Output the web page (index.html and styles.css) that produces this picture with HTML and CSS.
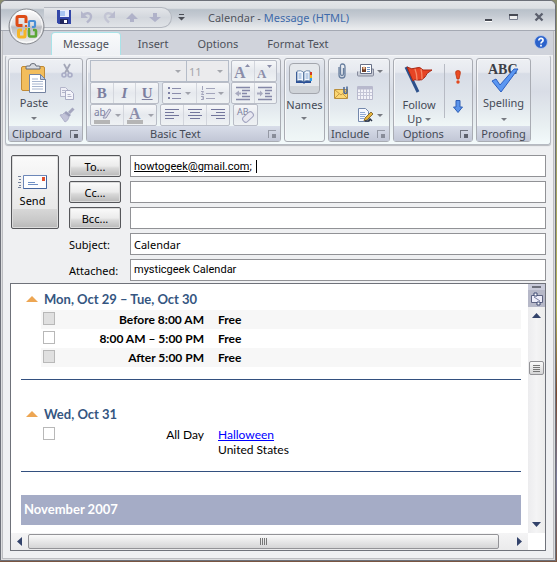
FILE: index.html
```html
<!DOCTYPE html>
<html lang="en">
<head>
<meta charset="utf-8">
<meta name="viewport" content="width=device-width, initial-scale=1">
<title>Calendar - Message (HTML)</title>
<link rel="stylesheet" href="styles.css">
</head>
<body>
<main class="window">
  <header class="titlebar">
    <button class="orb" aria-label="Office Button">
      <svg width="37" height="37" viewBox="0 0 37 37">
        <defs><linearGradient id="orb" x1="0" y1="0" x2="0" y2="1"><stop offset="0" stop-color="#fff"/><stop offset=".45" stop-color="#dcdde0"/><stop offset=".52" stop-color="#b9bbc0"/><stop offset="1" stop-color="#f4f4f5"/></linearGradient></defs>
        <circle cx="18.500" cy="18.500" r="17.500" fill="url(#orb)" stroke="#85888e"/>
        <circle cx="18.500" cy="18.500" r="16" fill="none" stroke="#fff" stroke-opacity=".8"/>
        <g fill="none" stroke-width="3" stroke-linejoin="round">
          <path d="M18 15V10q0-1.500-1.500-1.500H10.500Q9 8.500 9 10v6q0 1.500 1.500 1.500h4" stroke="#dd4b16"/>
          <path d="M21 17v-3q0-1 1-1h4q1 0 1 1v4q0 1-1 1h-2" stroke="#4b8fd6" stroke-width="2.200"/>
          <path d="M17 22v6q0 1-1 1h-4q-1.500 0-1.500-1.500V23q0-1 1-1H14" stroke="#f5b526"/>
          <path d="M21 22v5q0 1.500 1 1.500h5q1 0 1-1V23q0-1-1-1h-2" stroke="#5aa735" stroke-width="2.600"/>
        </g>
        <g fill="#e0571c"><rect x="17" y="17" width="2" height="2"/><rect x="20" y="17" width="2" height="2" fill="#4b8fd6"/><rect x="17" y="20" width="2" height="2" fill="#f5b526"/><rect x="20" y="20" width="2" height="2" fill="#5aa735"/></g>
      </svg>
    </button>
    <div class="quick">
      <button aria-label="Save"><svg width="14" height="14" viewBox="0 0 14 14"><path d="M0 0h14v14H1.500L0 12.500z" fill="#3347a8"/><path d="M3 0h9v7H3z" fill="#e8eefc"/><path d="M3 1h5v5H3z" fill="#a9c6f2"/><path d="M3 9h8v5H3z" fill="#20275c"/><path d="M7 10h3v3H7z" fill="#fff"/></svg></button>
      <button aria-label="Undo"><svg width="14" height="14" viewBox="0 0 14 14"><path d="M3 5.500C5 2.500 11.500 2 11 7c-.3 2.500-2 3.500-4 5.500" fill="none" stroke="#b4b6cb" stroke-width="2.500"/><path d="M1 1l0 7h7z" fill="#b4b6cb"/></svg></button>
      <button aria-label="Redo"><svg width="14" height="14" viewBox="0 0 14 14"><path d="M10 5.500C8 2.500 1.500 2 2 7c.3 2.500 2 3.500 4 5.500" fill="none" stroke="#c3c5d4" stroke-width="2.500"/><path d="M12 1v7H5z" fill="#b9bbce"/></svg></button>
      <button aria-label="Previous item"><svg width="14" height="14" viewBox="0 0 14 14"><path d="M6 3l6 6H8v3H4V9H0z" fill="#b0b2c9"/></svg></button>
      <button aria-label="Next item"><svg width="14" height="14" viewBox="0 0 14 14"><path d="M6 12L0 7h4V3h4v4h4z" fill="#b0b2c9"/></svg></button>
    </div>
    <button class="customize" aria-label="Customize Quick Access Toolbar"><svg width="7" height="7" viewBox="0 0 7 7"><path d="M1 0h5v1H1zM0 3h7L3.500 6.500z" fill="#4c4f57"/></svg></button>
    <h1 class="title">Calendar - <span>Message (HTML)</span></h1>
    <div class="caption">
      <button aria-label="Minimize"><svg width="10" height="10" viewBox="0 0 10 10"><path d="M1 7h7v2H1z" fill="#474a53"/><path d="M1 9h7v1H1z" fill="#fff"/></svg></button>
      <button aria-label="Maximize"><svg width="10" height="10" viewBox="0 0 10 10"><path d="M.5 2.500h8v5h-8z" fill="#eee" stroke="#777d8c"/><path d="M0 2h9v2H0z" fill="#474a53"/></svg></button>
      <button aria-label="Close"><svg width="10" height="10" viewBox="0 0 10 10"><path d="M1.500 1.500l7 7M8.500 1.500l-7 7" stroke="#5b606d" stroke-width="2.300"/></svg></button>
    </div>
  </header>

  <nav class="tabs">
    <a class="tab active" href="#message">Message</a>
    <a class="tab" href="#insert">Insert</a>
    <a class="tab" href="#options">Options</a>
    <a class="tab" href="#format">Format Text</a>
    <button class="help" aria-label="Help"><svg width="14" height="14" viewBox="0 0 14 14"><circle cx="7" cy="7" r="6.500" fill="#2b62cb" stroke="#b9c8e8"/><path d="M4.800 5.500C4.800 2.500 9.500 2.800 9 5.500 8.700 7 7 6.800 7 8.500M7 9.800v1.600" fill="none" stroke="#fff" stroke-width="1.700"/></svg></button>
  </nav>

  <div class="ribbon">
    <section class="group clipboard">
      <div class="tools">
        <button class="big">
          <svg width="28" height="31" viewBox="0 0 28 31"><rect x="1.500" y="3.500" width="23" height="24" rx="1.500" fill="#f2bd5c" stroke="#c18a35"/><path d="M6 6V4q0-1 1-1h3q0-2.500 3-2.500T16 3h3q1 0 1 1v2z" fill="#d9dce2" stroke="#676d78"/><path d="M9.500 11.500h11l5 5v13h-16z" fill="#fff" stroke="#7483a0"/><path d="M20.500 11.500v5h5z" fill="#bccbe4" stroke="#7483a0"/><path d="M12 16h6M12 18.500h11M12 21h11M12 23.500h11M12 26h11" stroke="#a8b6cf"/></svg>
          <span>Paste</span><i class="arrow"></i>
        </button>
        <div class="stack">
          <button aria-label="Cut"><svg width="16" height="16" viewBox="0 0 16 16"><path d="M5 1l5 9M11 1L6 10" stroke="#a3a6b7" stroke-width="1.800"/><circle cx="5" cy="12" r="2" fill="none" stroke="#a9acc6" stroke-width="1.600"/><circle cx="11" cy="12" r="2" fill="none" stroke="#a9acc6" stroke-width="1.600"/></svg></button>
          <button aria-label="Copy"><svg width="16" height="16" viewBox="0 0 16 16"><path d="M1.500 2.500h5l3 3v6h-8z" fill="#eeeef6" stroke="#b3b5ca"/><path d="M6.500 5.500h5l3 3v6h-8z" fill="#f4f4fa" stroke="#a9abc4"/><path d="M3 5.500h3M3 7.500h3M8.500 9.500h3M8.500 11.500h4" stroke="#b3b5ca"/></svg></button>
          <button aria-label="Format Painter"><svg width="16" height="16" viewBox="0 0 16 16"><path d="M14.500 1.500L10 6" stroke="#a5a7bf" stroke-width="3"/><path d="M7 4l5 4-2 2-5-4z" fill="#9c9eba"/><path d="M5 6l5 4q-1 4-4 5L1 8q3 0 4-2z" fill="#c2c3d8" stroke="#b0b2ca"/></svg></button>
        </div>
      </div>
      <h2>Clipboard<button class="launch" aria-label="Clipboard options"></button></h2>
    </section>

    <section class="group basic">
      <div class="tools">
        <div class="row">
          <label class="pick font"><select aria-label="Font"><option></option></select></label>
          <label class="pick size"><select aria-label="Font size"><option>11</option></select></label>
          <div class="set end"><button aria-label="Grow Font"><svg width="18" height="18" viewBox="0 0 18 18"><text x="0" y="16" class="serif" font-size="16">A</text><path d="M11 5l2.500-3L16 5z" fill="#8b8eaa"/></svg></button><button aria-label="Shrink Font"><svg width="18" height="18" viewBox="0 0 18 18"><text x="1" y="16" class="serif" font-size="13">A</text><path d="M11 3l2.500 3L16 3z" fill="#8b8eaa"/></svg></button></div>
        </div>
        <div class="row">
          <div class="set biu"><button class="serif b">B</button><button class="serif i">I</button><button class="serif u">U</button></div>
          <div class="set lists">
            <button aria-label="Bullets"><svg width="14" height="14" viewBox="0 0 14 14"><path d="M4 2.500h9M4 7.500h9M4 12.500h9" stroke="#8b8dab"/><path d="M0 1h2v2H0zM0 6h2v2H0zM0 11h2v2H0z" fill="#7d80a5"/></svg><i class="arrow"></i></button>
            <button aria-label="Numbering"><svg width="14" height="14" viewBox="0 0 14 14"><path d="M5 2.500h9M5 7.500h9M5 12.500h9" stroke="#a3a5bb"/><path d="M1.500 0v4M0 5.500h2.500L.5 8.500H3M0 10.500h2.500v3H0M1 12h1" fill="none" stroke="#a3a5bb"/></svg><i class="arrow"></i></button>
          </div>
          <div class="set end">
            <button aria-label="Decrease Indent"><svg width="16" height="15" viewBox="0 0 16 15"><path d="M1 1.500h14M7 4.500h8M7 7.500h5M7 10.500h8M1 13.500h14" stroke="#8588a8" stroke-width="1.500"/><path d="M0 7.500l4-3v2h2v2H4v2z" fill="#a8aabf"/></svg></button>
            <button aria-label="Increase Indent"><svg width="16" height="15" viewBox="0 0 16 15"><path d="M1 1.500h14M8 4.500h7M8 7.500h5M8 10.500h7M1 13.500h14" stroke="#8588a8" stroke-width="1.500"/><path d="M6 7.500l-3-3v2H0v2h3v2z" fill="#a8aabf"/></svg></button>
          </div>
        </div>
        <div class="row">
          <div class="set colors">
            <button aria-label="Text Highlight Color"><svg width="18" height="18" viewBox="0 0 18 18"><text x="0" y="10" font-size="10" class="ab">ab</text><path d="M9 12l6-9 2 1-5 8z" fill="#d9dae6" stroke="#9497b3"/><path d="M0 14h16v4H0z" fill="#b5b5b5"/></svg><i class="arrow"></i></button>
            <button aria-label="Font Color"><svg width="18" height="18" viewBox="0 0 18 18"><text x="2" y="13" font-size="16" class="serif">A</text><path d="M0 14h16v4H0z" fill="#b5b5b5"/></svg><i class="arrow"></i></button>
          </div>
          <div class="set aligns">
            <button aria-label="Align Left"><svg width="14" height="14" viewBox="0 0 14 14"><path d="M0 1.500h14M0 4.500h9M0 7.500h14M0 10.500h9" stroke="#73769c"/></svg></button>
            <button aria-label="Center"><svg width="14" height="14" viewBox="0 0 14 14"><path d="M0 1.500h14M2 4.500h10M0 7.500h14M2 10.500h10" stroke="#73769c"/></svg></button>
            <button aria-label="Align Right"><svg width="14" height="14" viewBox="0 0 14 14"><path d="M0 1.500h14M5 4.500h9M0 7.500h14M5 10.500h9" stroke="#73769c"/></svg></button>
          </div>
          <div class="set clear"><button aria-label="Clear Formatting"><svg width="18" height="18" viewBox="0 0 18 18"><text x="0" y="9" font-size="9" class="ab">AB</text><rect x="5" y="8" width="12" height="6" rx="2.500" transform="rotate(-42 11 11)" fill="#e8e8f1" stroke="#a2a4bf"/></svg></button></div>
        </div>
      </div>
      <h2>Basic Text<button class="launch dim" aria-label="Basic Text options"></button></h2>
    </section>

    <section class="group names">
      <button class="big">
        <span class="tile"><svg width="18" height="14" viewBox="0 0 18 14"><path d="M1 2v11h7l1 1 1-1h6V2z" fill="#2a4f96"/><path d="M2 1q4-1 6.500 1v9.500Q6 10 2 11zM15 1q-4-1-6 1v9.500Q11 10 15 11z" fill="#f3f8ff" stroke="#58779f" stroke-width=".8"/><path d="M3.500 4h3M3.500 6h3M3.500 8h3M10.500 4h3M10.500 6h3M10.500 8h3" stroke="#7fa2cf"/><path d="M15 2h2v3h-2z" fill="#d33a26"/><path d="M15 5h2v3h-2z" fill="#f0b51b"/><path d="M15 8h2v3h-2z" fill="#36a2e8"/></svg></span>
        <span>Names</span><i class="arrow"></i>
      </button>
    </section>

    <section class="group include">
      <div class="tools">
        <button aria-label="Attach File"><svg width="16" height="16" viewBox="0 0 16 16"><path d="M5 4v8q0 3 3 3t3-3V4q0-3-2.500-3T6.500 4v7q0 1.500 1.500 1.500T9.500 11V5" fill="none" stroke="#697f9f" stroke-width="1.300"/></svg></button>
        <button aria-label="Business Card"><svg width="17" height="16" viewBox="0 0 17 16"><path d="M.5 8.500V12q0 1 1 1h14q1 0 1-1V6h-3" fill="#c8ccd6" stroke="#84899b"/><path d="M3.500 1.500h11v9h-11z" fill="#fff" stroke="#666f86"/><path d="M5 4h4v5H5z" fill="#6d3d27"/><circle cx="7" cy="5" r="1.500" fill="#e7b48f"/><path d="M10 4.500h3M10 6.500h3M10 8.500h3" stroke="#6d93c7"/></svg><i class="arrow"></i></button>
        <button aria-label="Attach Item"><svg width="16" height="16" viewBox="0 0 16 16"><path d="M.5 4.500h13v9H.5z" fill="#fbd774" stroke="#b98f3e"/><path d="M1 5l6 5 6-5M1 13l4-4M13 13L9 9" fill="none" stroke="#c69a45"/><path d="M10 2v5q0 1.500 1.500 1.500T13 7V1.500" fill="none" stroke="#4a6796" stroke-width="1.500"/></svg></button>
        <button aria-label="Calendar"><svg width="17" height="16" viewBox="0 0 17 16"><path d="M.5 1.500h15v13H.5z" fill="#f3f3f9" stroke="#b8b9cd"/><path d="M1 3h14" stroke="#b8b9cd" stroke-width="3"/><path d="M1 7.500h14M1 10.500h14M3.500 4v10M6.500 4v10M9.500 4v10M12.500 4v10" stroke="#c4c5d6"/></svg></button>
        <i></i>
        <button aria-label="Signature"><svg width="17" height="16" viewBox="0 0 17 16"><path d="M1.500 1.500h7l3 3v10h-10z" fill="#f6f9ff" stroke="#7488ac"/><path d="M3 5.500h5M3 7.500h6M3 9.500h5M3 11.500h4" stroke="#8fa9d3"/><path d="M14 5L8 11l-1 3 3-1 6-6z" fill="#e7b63d" stroke="#6e5420" stroke-width=".8"/><path d="M8 14h4l1-2 2 2" fill="none" stroke="#2b3447" stroke-width="1.500"/></svg><i class="arrow"></i></button>
      </div>
      <h2>Include<button class="launch dim" aria-label="Include options"></button></h2>
    </section>

    <section class="group options">
      <div class="tools">
        <button class="big">
          <svg width="28" height="28" viewBox="0 0 28 28"><path d="M1 2l12 25" stroke="#2d518c" stroke-width="3"/><path d="M2 2q5 3 9 1t7 2l9 0q-6 3-7 7-3 4-7 3t-5 1z" fill="#e64425" stroke="#a92815"/><path d="M10 4q2 5 2 11M16 4q1 4 1 10" fill="none" stroke="#f58a69" stroke-width="1.300"/></svg>
          <span>Follow<br>Up <i class="arrow"></i></span>
        </button>
        <div class="levels">
          <button aria-label="High Importance"><svg width="10" height="16" viewBox="0 0 10 16"><path d="M5 1.500q3 0 2.300 3L6 10H4L2.700 4.500Q2 1.500 5 1.500z" fill="#ec4b22" stroke="#b9340f" stroke-width=".8"/><circle cx="5" cy="13" r="1.700" fill="#e2481d"/></svg></button>
          <button aria-label="Low Importance"><svg width="10" height="16" viewBox="0 0 10 16"><path d="M3 1.500h4V8h2.500L5 13.500.5 8H3z" fill="#5a93ea" stroke="#2f5fb5"/></svg></button>
        </div>
      </div>
      <h2>Options<button class="launch" aria-label="Message options"></button></h2>
    </section>

    <section class="group proofing">
      <div class="tools">
        <button class="big">
          <svg width="32" height="30" viewBox="0 0 32 30"><text x="0" y="11" font-size="14" class="abc">ABC</text><path d="M4 18l4-2 4 6L26 6l4 0-17 23z" fill="#5b97f2" stroke="#2c5fc0"/></svg>
          <span>Spelling</span><i class="arrow"></i>
        </button>
      </div>
      <h2>Proofing</h2>
    </section>
  </div>

  <form class="compose">
    <button class="send" type="button">
      <svg width="30" height="16" viewBox="0 0 30 16"><path d="M5.500 1.500h23v13h-23z" fill="#fdfeff" stroke="#6c87b8"/><path d="M5.500 14.500h23v-13" fill="none" stroke="#45659e"/><path d="M24 3h3v4h-3z" fill="#e0502e"/><path d="M10 8.500h7M10 10.500h10" stroke="#6f90c4"/><path d="M0 2.500h3M1 5.500h2M0 8.500h3M1 11.500h2M0 13.500h3" stroke="#76839b"/></svg>
      Send
    </button>
    <div class="fields">
      <button class="pushy" type="button">To...</button>
      <div class="box to"><span>howtogeek@gmail.com</span><input aria-label="To" value="; "></div>
      <button class="pushy" type="button">Cc...</button>
      <input class="box" aria-label="Cc">
      <button class="pushy" type="button">Bcc...</button>
      <input class="box" aria-label="Bcc">
      <label for="subject">Subject:</label>
      <input class="box" id="subject" value="Calendar">
      <label for="attached">Attached:</label>
      <input class="box attached" id="attached" value="mysticgeek Calendar">
    </div>
  </form>

  <section class="editor">
    <article class="page">
      <h3>Mon, Oct 29 – Tue, Oct 30</h3>
      <table class="slots bold">
        <tr class="shade"><td><input type="checkbox" class="off" aria-label="Before 8:00 AM"></td><th>Before 8:00 AM</th><td>Free</td></tr>
        <tr><td><input type="checkbox" aria-label="8:00 AM to 5:00 PM"></td><th>8:00 AM – 5:00 PM</th><td>Free</td></tr>
        <tr class="shade"><td><input type="checkbox" class="off" aria-label="After 5:00 PM"></td><th>After 5:00 PM</th><td>Free</td></tr>
      </table>
      <hr>
      <h3>Wed, Oct 31</h3>
      <table class="slots">
        <tr><td><input type="checkbox" aria-label="All Day"></td><th>All Day</th><td><a href="#halloween">Halloween</a><br>United States</td></tr>
      </table>
      <hr>
      <h2 class="month">November 2007</h2>
    </article>
    <div class="vscroll">
      <div class="split"></div>
      <button class="ruler" aria-label="Select browse object"><svg width="12" height="12" viewBox="0 0 12 12"><path d="M.5 2.500h11v7H.5z" fill="#eeeefa" stroke="#5d6382"/><path d="M3 0h3v3H3zM6 9h3v3H6z" fill="#fff" stroke="#3f4a75"/><path d="M3 4l6 4" stroke="#7a80a0"/></svg></button>
      <button class="step" aria-label="Scroll up"><svg width="9" height="5" viewBox="0 0 9 5"><path d="M0 5h9L4.500 0z" fill="#33436b"/></svg></button>
      <div class="track"><div class="thumb"></div></div>
      <button class="step" aria-label="Scroll down"><svg width="9" height="5" viewBox="0 0 9 5"><path d="M0 0h9L4.500 5z" fill="#33436b"/></svg></button>
    </div>
    <div class="hscroll">
      <button class="step" aria-label="Scroll left"><svg width="5" height="9" viewBox="0 0 5 9"><path d="M5 0v9L0 4.500z" fill="#33436b"/></svg></button>
      <div class="track"><div class="thumb"></div></div>
      <button class="step" aria-label="Scroll right"><svg width="5" height="9" viewBox="0 0 5 9"><path d="M0 0v9l5-4.500z" fill="#33436b"/></svg></button>
    </div>
  </section>
</main>
</body>
</html>
```
FILE: styles.css
```css
* { box-sizing: border-box; }
body {
  margin: 0;
  padding: 0 1px 1px 0;
  min-height: 100vh;
  display: flex;
  background: linear-gradient(#8b8d70, #b9b65c 55%, #7c4a30 70%, #7d7f9c 85%, #7a5540);
  font: 11px/15px "Noto Sans", "Open Sans", sans-serif;
  color: #000;
}
button, input, select { font: inherit; color: inherit; margin: 0; padding: 0; }
button { border: 0; background: none; }
h1, h2, h3 { margin: 0; font: inherit; }
svg { display: block; flex: none; overflow: visible; }

.window {
  flex: 1;
  min-width: 0;
  display: flex;
  flex-direction: column;
  border: 1px solid #6d7079;
  border-radius: 6px 6px 0 0;
  background: #eff0f2;
  box-shadow: inset 0 0 0 1px #dcdddf, inset 0 0 0 2px #bcbdc1;
  padding: 0 4px 9px;
}

/* Title bar */
.titlebar {
  display: flex;
  align-items: center;
  height: 30px;
  margin: 0 -4px;
  padding: 3px 8px 0 7px;
  position: relative;
  border-bottom: 1px solid #a5a9b3;
  border-radius: 5px 5px 0 0;
  background: linear-gradient(#e4e6e9, #dcdfe3 25%, #b9c1ca 30%, #c4cad2 50%, #eaecee 97%);
}
.orb { width: 37px; height: 37px; position: absolute; left: 7px; top: 7px; z-index: 2; }
.quick {
  display: flex;
  align-items: center;
  gap: 9px;
  height: 21px;
  margin-left: 36px;
  padding: 0 8px 0 13px;
  border: 1px solid #b4b8c0;
  border-left: 0;
  border-radius: 0 11px 11px 0;
  background: linear-gradient(#e3e5e9, #d3d7dd 50%, #e0e3e7);
}
.customize { margin-left: 6px; }
.title { flex: 1; padding-left: 23px; color: #50545e; white-space: nowrap; }
.title span { color: #3e6aaa; }
.caption { display: flex; gap: 15px; padding-right: 3px; }

/* Tabs */
.tabs {
  display: flex;
  height: 24px;
  margin: 0 -2px;
  padding: 2px 5px 0 49px;
  background: #d0d3db;
}
.tab {
  padding: 3px 11px 0;
  margin-right: 7px;
  border-radius: 3px 3px 0 0;
  color: #4c5059;
  text-decoration: none;
  white-space: nowrap;
}
.tab.active { background: linear-gradient(#f9fafb, #eff1f5); box-shadow: 0 0 0 1px #a9e3e8; }
.help { margin: 2px 0 0 auto; align-self: flex-start; }

/* Ribbon */
.ribbon {
  display: flex;
  gap: 3px;
  height: 90px;
  padding: 2px;
  border: 1px solid #b6bac2;
  border-top-color: #f4f5f7;
  border-radius: 3px;
  background: linear-gradient(#eceef2, #d9dde6 40%, #e9f0f2 80%, #f3fafb);
  box-shadow: 0 1px 1px #b6b8bd;
  color: #454a56;
}
.group {
  display: flex;
  flex-direction: column;
  flex: none;
  border: 1px solid #a9acb3;
  border-radius: 3px;
  background: linear-gradient(#eef0f4, #e6e9ef 16%, #d7dce6 18%, #e3e9ee 60%, #f0f7f7 82%);
  box-shadow: inset 1px 1px 0 #f6f7f9;
}
.group h2 {
  display: flex;
  align-items: center;
  justify-content: center;
  height: 15px;
  background: linear-gradient(#d8dde9, #c2c7d6);
  white-space: nowrap;
}
.tools { flex: 1; min-height: 0; display: flex; }
.launch {
  width: 8px;
  height: 8px;
  margin: 0 4px 0 auto;
  border: solid #70747f;
  border-width: 1px 0 0 1px;
  background: linear-gradient(#5e626d, #5e626d) right bottom / 4px 4px no-repeat;
}
.launch.dim { opacity: .6; }
.arrow { display: inline-block; border: 3px solid transparent; border-top-color: #777a82; border-bottom: 0; }
.big { display: flex; flex-direction: column; align-items: center; line-height: 14px; }
.big > .arrow { margin-top: 5px; }

.clipboard { width: 75px; }
.clipboard h2 { padding-left: 3px; }
.clipboard .big { width: 50px; padding-top: 4px; gap: 2px; }
.stack { display: flex; flex-direction: column; gap: 6px; padding-top: 4px; }

.basic { width: 195px; }
.basic .tools { flex-direction: column; padding: 1px 3px 0; }
.basic h2 { padding-left: 63px; }
.row { display: flex; height: 22px; }
.row .end { margin-left: auto; width: 46px; }
.pick {
  position: relative;
  height: 22px;
  border: 1px solid #b5bcc8;
  background: #ebebed;
}
.pick::after {
  content: "";
  position: absolute;
  right: 5px;
  top: 9px;
  border: 3px solid transparent;
  border-top-color: #a5a7ad;
  border-bottom: 0;
}
.pick select { appearance: none; width: 100%; height: 100%; padding-left: 2px; border: 0; border-radius: 0; background: none; color: #a5a6aa; }
.pick.font { width: 97px; }
.pick.size { width: 43px; margin-left: -1px; }
.set { display: flex; height: 22px; border: 1px solid #b9bdc7; border-radius: 2px; background: linear-gradient(#f6f7f9, #e6e9ee 50%, #eff2f4); }
.set button { flex: 1; display: flex; align-items: center; justify-content: center; gap: 3px; }
.set button + button { border-left: 1px solid #d3d6dd; }
.set .arrow { border-top-color: #a0a2ab; }
.biu { width: 69px; }
.lists { width: 68px; margin-left: 3px; }
.colors { width: 67px; }
.aligns { width: 70px; margin-left: 3px; }
.clear { width: 25px; margin-left: 3px; }
.serif { font-family: "Liberation Serif", serif; font-weight: 700; color: #7c7f9f; fill: #8b8eaa; }
button.serif { font-size: 15px; }
.serif.i { font-style: italic; }
.serif.u { text-decoration: underline; }
.ab { fill: #7c7fa0; font-family: "Noto Sans", sans-serif; }
.abc { fill: #3c3f48; font-family: "Liberation Serif", serif; font-weight: 700; }

.names { width: 41px; align-items: center; background: linear-gradient(#e6e9ef, #d7dce6 18%, #e3e9ee 60%, #f0f7f7); }
.names .big { padding-top: 4px; }
.tile {
  display: flex;
  justify-content: center;
  width: 31px;
  height: 31px;
  margin-bottom: 4px;
  padding-top: 6px;
  border: 1px solid #a3a6ad;
  border-radius: 4px;
  background: linear-gradient(#e5e8ec 75%, #cfd3d8 75%);
}

.include { width: 62px; }
.include .tools { display: grid; grid-template-columns: 22px 1fr; align-content: start; gap: 6px 1px; padding: 4px 0 0 5px; }
.include .tools button { display: flex; align-items: center; gap: 3px; }
.include h2 { padding-left: 2px; }

.options { width: 80px; }
.options .big { width: 50px; padding-top: 6px; gap: 5px; }
.options .arrow { margin-bottom: 2px; }
.options h2 { padding-left: 9px; }
.levels { display: flex; flex-direction: column; gap: 14px; margin: 5px 0 8px; padding: 5px 0 0 8px; border-left: 1px solid #b7bbc4; }
.proofing { width: 55px; }
.proofing .big { flex: 1; padding-top: 4px; gap: 3px; }

/* Address fields */
.compose { display: flex; gap: 10px; padding: 10px 5px 0 6px; }
.send, .pushy {
  border: 1px solid #55565a;
  border-radius: 2px;
  background: linear-gradient(#fbfbfb, #ebebeb 50%, #d9d9d9 60%, #b9b9b9);
  box-shadow: inset 0 0 0 1px #dcdcdc;
}
.send {
  display: flex;
  flex-direction: column;
  align-items: center;
  justify-content: center;
  gap: 3px;
  width: 48px;
  height: 74px;
  padding: 0 5px 2px 0;
  background: linear-gradient(#fafafa, #e8e8e8 73%, #d7d7d7 74%, #cacaca 88%, #b8b8b8);
}
.fields { flex: 1; min-width: 0; display: grid; grid-template-columns: 52px minmax(0, 1fr); gap: 4px 9px; align-items: center; }
.pushy { height: 22px; }
.box { width: 100%; height: 22px; padding: 0 3px; border: 1px solid #919296; border-radius: 0; background: #fff; }
.box.attached { padding-bottom: 2px; font-family: Roboto, sans-serif; }
.fields label { white-space: nowrap; }
.to { display: flex; align-items: center; font-family: Roboto, sans-serif; }
.to span { text-decoration: underline; }
.to input { flex: 1; min-width: 0; height: 15px; border: 0; background: linear-gradient(#000, #000) 7px 1px / 1px 13px no-repeat; }

/* Message body */
.editor {
  flex: 1;
  display: grid;
  grid-template: 1fr 17px / minmax(0, 1fr) 17px;
  margin: 2px 5px 0;
  border: 1px solid #6f727a;
  background: #fff;
}
.page { padding: 5px 7px 6px 10px; font: 12px/15px Lato, "Noto Sans", sans-serif; }
.page h3 { display: flex; align-items: center; gap: 6px; height: 20px; margin-bottom: 1px; padding-left: 5px; font-size: 13px; font-weight: 700; color: #355681; }
.page h3::before { content: ""; border: 6px solid transparent; border-bottom-color: #eda653; border-top: 0; }
.slots { width: calc(100% - 20px); margin-left: 20px; border-collapse: collapse; }
.slots td, .slots th { height: 19px; padding: 2px 0; vertical-align: top; font-weight: 400; }
.slots th { width: 144px; text-align: right; }
.slots td:first-child { width: 19px; padding: 2px 0 0 2px; line-height: 0; }
.slots td:last-child { padding-left: 14px; }
.slots.bold th, .slots.bold td { font-weight: 700; }
.slots a { color: #00f; }
.slots input { appearance: none; width: 12px; height: 13px; border: 1px solid #b8b8b8; background: #fff; }
.slots input.off { background: #e0e0e0; }
.shade { background: #f7f7f7; }
.page hr { height: 1px; margin: 12px 0 24px; border: 0; background: #33507f; }
.page hr:last-of-type { margin-bottom: 23px; }
.month { height: 30px; padding: 7px 3px; background: #a5acc6; color: #fff; font-size: 13px; font-weight: 700; }

.vscroll { display: flex; flex-direction: column; background: linear-gradient(90deg, #ececee, #f4f4f5 50%, #ececec); }
.split { height: 6px; padding: 2px 4px; background: #c9cbda; }
.split::before { content: ""; display: block; height: 2px; background: #6e717d; }
.ruler { height: 17px; display: flex; align-items: center; justify-content: center; background: #b6b8c8; }
.step { display: flex; align-items: center; justify-content: center; width: 17px; height: 17px; }
.track { flex: 1; display: flex; }
.thumb { border: 1px solid #939397; border-radius: 2px; background: linear-gradient(#fafafa, #d5d5d6); }
.vscroll .track { flex-direction: column; padding: 37px 1px 0; }
.vscroll .thumb { height: 14px; padding: 3px; }
.vscroll .thumb::before { content: ""; display: block; height: 7px; background: repeating-linear-gradient(#777 0 1px, transparent 1px 2px); }
.hscroll { display: flex; background: linear-gradient(#f4f4f5, #ebebec); }
.hscroll .thumb { flex: 1; display: flex; justify-content: center; align-items: center; margin: 1px 12px 1px 0; }
.hscroll .thumb::before { content: ""; width: 8px; height: 7px; background: repeating-linear-gradient(90deg, #777 0 1px, transparent 1px 2px); }
```
